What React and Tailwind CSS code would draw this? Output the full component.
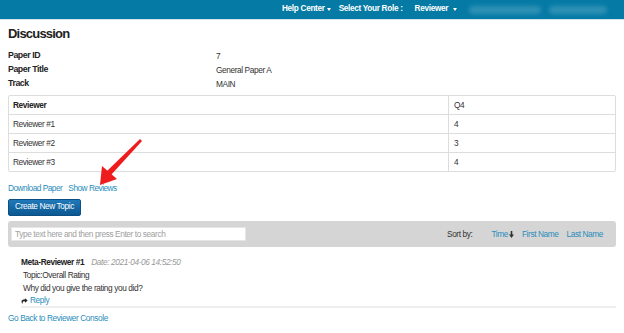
import React from 'react'
import { FaShare } from 'react-icons/fa'

const reviewers = [
  { name: 'Reviewer #1', q4: '4' },
  { name: 'Reviewer #2', q4: '3' },
  { name: 'Reviewer #3', q4: '4' },
]

function Caret() {
  return <span className="inline-block ml-[2px] w-0 h-0 border-x-[2px] border-x-transparent border-t-[3px] border-t-white align-middle" />
}

export default function App() {
  return (
    <div className="relative w-[624px] h-[333px] bg-white overflow-hidden text-[#333] font-['Liberation_Sans',Arial,sans-serif] text-[8.3px] tracking-[-0.4px]">
      {/* top bar */}
      <header className="h-[20px] bg-[#047aa5] border-b border-[#cfe2ea] flex items-center text-white font-bold text-[8.2px] tracking-[-0.3px]">
        <div className="ml-[282px] flex items-center">
          Help Center<Caret />
        </div>
        <div className="ml-[8px]">Select Your Role :</div>
        <div className="ml-[12px] flex items-center">
          Reviewer <span className="ml-[3px]"><Caret /></span>
        </div>
        <div className="ml-[12px] w-[72px] h-[8px] rounded-full bg-[#6fb3cd] opacity-40 blur-[2px]" />
        <div className="ml-[8px] w-[58px] h-[8px] rounded-full bg-[#6fb3cd] opacity-40 blur-[2px]" />
      </header>

      <div className="px-2">
        <h1 className="h-[28px] flex items-center font-bold text-[13px] tracking-[-0.8px] text-[#222]">Discussion</h1>

        <div className="pt-[1px]">
          {[
            ['Paper ID', '7'],
            ['Paper Title', 'General Paper A'],
            ['Track', 'MAIN'],
          ].map(([k, v]) => (
            <div key={k} className="h-[14px] flex items-center">
              <span className="w-[208px] font-bold text-[8.8px] tracking-[-0.45px] text-[#222]">{k}</span>
              <span>{v}</span>
            </div>
          ))}
        </div>

        {/* reviewer table */}
        <div className="mt-[4px] border border-[#dddddd] rounded-[2px]">
          <div className="h-[18px] flex items-center">
            <div className="w-[440px] pl-[4px] font-bold text-[#222] h-full flex items-center border-r border-[#dddddd]">Reviewer</div>
            <div className="pl-[5px]">Q4</div>
          </div>
          {reviewers.map((r) => (
            <div key={r.name} className="h-[19px] flex items-center border-t border-[#dddddd]">
              <div className="w-[440px] pl-[4px] h-full flex items-center border-r border-[#dddddd]">{r.name}</div>
              <div className="pl-[5px]">{r.q4}</div>
            </div>
          ))}
        </div>

        <div className="mt-[9px] h-[14px] flex items-center gap-[6px] text-[#2b8dbb] tracking-[-0.5px]">
          <span>Download Paper</span>
          <span>Show Reviews</span>
        </div>

        <button className="mt-[4px] h-[17px] w-[73px] rounded-[2px] bg-gradient-to-b from-[#2079b9] to-[#0c5892] border border-[#0b4f84] text-white text-[8.2px] tracking-[-0.35px] flex items-center justify-center">
          Create New Topic
        </button>

        {/* search / sort bar */}
        <div className="mt-[5px] h-[26px] bg-[#d5d5d5] rounded-[3px] flex items-center pl-[3px]">
          <div className="w-[235px] h-[14px] bg-white border border-[#e6e6e6] flex items-center pl-[3px] text-[#a0a0a0]">
            Type text here and then press Enter to search
          </div>
          <span className="ml-[201px]">Sort by:</span>
          <span className="ml-[19px] flex items-center text-[#2b8dbb]">
            Time
            <svg width="5" height="7" viewBox="0 0 5 7" className="ml-[1px]">
              <rect x="1.7" y="0" width="1.6" height="4" fill="#333" />
              <polygon points="0,3.5 5,3.5 2.5,7" fill="#333" />
            </svg>
          </span>
          <span className="ml-[8px] text-[#2b8dbb]">First Name</span>
          <span className="ml-[8px] text-[#2b8dbb]">Last Name</span>
        </div>

        {/* comment */}
        <div className="ml-[13px] mt-[9px] border-b-2 border-[#eeeeee]">
          <div className="h-[13px] flex items-center">
            <span className="font-bold text-[#222]">Meta-Reviewer #1</span>
            <span className="ml-[7px] italic text-[#999]">Date: 2021-04-06 14:52:50</span>
          </div>
          <div className="h-[13px] flex items-center pl-[2px]">Topic:Overall Rating</div>
          <div className="h-[13px] flex items-center pl-[2px]">Why did you give the rating you did?</div>
          <div className="h-[11px] flex items-center text-[#2b8dbb]">
            <FaShare className="text-[#222] w-[7px] h-[6px] mr-[2px]" />
            Reply
          </div>
        </div>

        <div className="h-[20px] flex items-center text-[#2b8dbb]">Go Back to Reviewer Console</div>
      </div>

      {/* annotation arrow */}
      <svg className="absolute left-0 top-0 pointer-events-none" width="624" height="333">
        <polygon points="140,139 142,141 111,175 107,171" fill="#ee1c1c" />
        <polygon points="100,185 102,166 117,179" fill="#ee1c1c" />
      </svg>
    </div>
  )
}
